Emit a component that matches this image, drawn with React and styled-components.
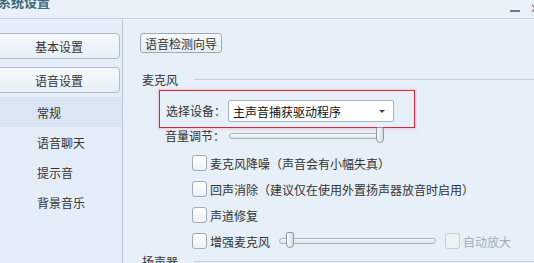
import React from "react";
import styled, { createGlobalStyle } from "styled-components";

const GlobalStyle = createGlobalStyle`
  html, body {
    margin: 0;
    padding: 0;
    background: #e7eff8;
  }
  body {
    font-family: "Noto Sans CJK SC", "Microsoft YaHei", sans-serif;
    font-size: 12px;
    color: #333;
  }
`;

const Window = styled.div`
  width: 534px;
  height: 263px;
  overflow: hidden;
  display: flex;
  flex-direction: column;
  background: #e7eff8;
`;

const TitleBar = styled.div`
  height: 18px;
  flex: none;
  display: flex;
  align-items: flex-start;
  justify-content: space-between;
  border-bottom: 1px solid #c3cfdb;
  background: #e9f0f7;
  box-shadow: 0 1px 0 #f6f9fc;
`;

const Title = styled.div`
  font-size: 13px;
  font-weight: bold;
  color: #3b6b7b;
  line-height: 13px;
  margin: -5px 0 0 -2px;
`;

const WinControls = styled.div`
  display: flex;
  align-items: center;
  gap: 10px;
  margin-top: 2px;
  margin-right: -7px;
`;

const Minimize = styled.div`
  width: 10px;
  height: 2px;
  background: #6b7885;
  margin-top: 6px;
`;

const Close = styled.div`
  font-size: 13px;
  line-height: 12px;
  color: #6b7885;
`;

const Body = styled.div`
  flex: 1;
  display: flex;
  min-height: 0;
`;

const Sidebar = styled.div`
  width: 122px;
  flex: none;
  border-right: 1px solid #bcc8d4;
  padding-top: 14px;
  display: flex;
  flex-direction: column;
  background: #e5eef8;
  & > * {
    flex-shrink: 0;
  }
`;

const SideButton = styled.div`
  height: 24px;
  margin-left: -2px;
  width: 120px;
  border: 1px solid #aebccb;
  border-radius: 0 4px 4px 0;
  background: linear-gradient(#f5f9fd, #e7eff7);
  display: flex;
  align-items: center;
  justify-content: center;
  margin-bottom: 8px;
  color: #333;
`;

const SideItem = styled.div`
  height: 30px;
  display: flex;
  align-items: center;
  padding-left: 37px;
  margin-top: ${(p) => (p.$first ? "-4px" : "0")};
  background: ${(p) => (p.$active ? "#dae6f4" : "transparent")};
  color: #333;
`;

const Main = styled.div`
  flex: 1;
  padding: 14px 0 0 17px;
  display: flex;
  flex-direction: column;
  min-width: 0;
  & > * {
    flex-shrink: 0;
  }
`;

const WizardButton = styled.div`
  align-self: flex-start;
  height: 18px;
  padding: 0 4px;
  border: 1px solid #9ea9b4;
  border-radius: 3px;
  background: linear-gradient(#f6f9fc, #e4ecf4);
  display: flex;
  align-items: center;
  color: #333;
`;

const GroupHeader = styled.div`
  display: flex;
  align-items: center;
  height: 14px;
  margin-top: ${(p) => p.$top || "0"};
  margin-left: 2px;
  &::after {
    content: "";
    flex: 1;
    height: 1px;
    margin-left: 16px;
    background: #c5d0db;
  }
`;

const DeviceBox = styled.div`
  margin: 4px 0 0 19px;
  width: 248px;
  height: 27px;
  padding: 9px 0 0 6px;
  border: 1px solid #d02a3c;
  box-shadow: 0 0 2px 1px rgba(245, 160, 170, 0.5);
  display: flex;
  align-items: flex-start;
  gap: 2px;
`;

const FieldLabel = styled.span`
  line-height: 22px;
  white-space: nowrap;
`;

const Select = styled.div`
  width: 166px;
  height: 22px;
  border: 1px solid #aab5c0;
  border-radius: 2px;
  background: #fff;
  display: flex;
  align-items: center;
  justify-content: space-between;
  padding: 0 8px 0 4px;
  box-sizing: border-box;
  color: #111;
  &::after {
    content: "";
    border-left: 3px solid transparent;
    border-right: 3px solid transparent;
    border-top: 3px solid #444;
  }
`;

const VolumeRow = styled.div`
  display: flex;
  align-items: center;
  height: 16px;
  margin: 0 0 0 25px;
  gap: 4px;
`;

const Track = styled.div`
  position: relative;
  width: ${(p) => p.$w}px;
  height: 4px;
  border: 1px solid #aab4be;
  border-radius: 3px;
  background: linear-gradient(#f8fafc, #dde4ea);
`;

const Thumb = styled.div`
  position: absolute;
  top: -7px;
  left: ${(p) => p.$left}px;
  width: 6px;
  height: 14px;
  border: 1px solid #8f9aa4;
  border-radius: 2px 2px 4px 4px;
  background: linear-gradient(90deg, #fafcfd, #d4dbe2);
`;

const Options = styled.div`
  display: flex;
  flex-direction: column;
  margin: 6px 0 0 52px;
`;

const OptionRow = styled.div`
  height: 26px;
  display: flex;
  align-items: center;
  gap: 3px;
  white-space: nowrap;
  color: #333;
`;

const Box = styled.span`
  width: 13px;
  height: 14px;
  flex: none;
  border: 1px solid ${(p) => (p.$disabled ? "#c6ced6" : "#9eaab6")};
  border-radius: 3px;
  background: ${(p) => (p.$disabled ? "#eef3f8" : "linear-gradient(#ffffff, #edf2f7)")};
`;

const Inline = styled.div`
  display: flex;
  align-items: center;
  gap: 3px;
  margin-left: ${(p) => p.$ml || "0"};
  color: ${(p) => (p.$disabled ? "#a3acb5" : "inherit")};
`;

export default function App() {
  return (
    <>
      <GlobalStyle />
      <Window>
        <TitleBar>
          <Title>系统设置</Title>
          <WinControls>
            <Minimize />
            <Close>✕</Close>
          </WinControls>
        </TitleBar>
        <Body>
          <Sidebar>
            <SideButton>基本设置</SideButton>
            <SideButton>语音设置</SideButton>
            <SideItem $active $first>常规</SideItem>
            <SideItem>语音聊天</SideItem>
            <SideItem>提示音</SideItem>
            <SideItem>背景音乐</SideItem>
          </Sidebar>
          <Main>
            <WizardButton>语音检测向导</WizardButton>
            <GroupHeader $top="19px">麦克风</GroupHeader>
            <DeviceBox>
              <FieldLabel>选择设备：</FieldLabel>
              <Select>主声音捕获驱动程序</Select>
            </DeviceBox>
            <VolumeRow>
              <FieldLabel>音量调节：</FieldLabel>
              <Track $w={150}>
                <Thumb $left={146} />
              </Track>
            </VolumeRow>
            <Options>
              <OptionRow>
                <Box />
                麦克风降噪（声音会有小幅失真）
              </OptionRow>
              <OptionRow>
                <Box />
                回声消除（建议仅在使用外置扬声器放音时启用）
              </OptionRow>
              <OptionRow>
                <Box />
                声道修复
              </OptionRow>
              <OptionRow>
                <Box />
                增强麦克风
                <Inline $ml="6px">
                  <Track $w={155}>
                    <Thumb $left={6} />
                  </Track>
                </Inline>
                <Inline $ml="6px" $disabled>
                  <Box $disabled />
                  自动放大
                </Inline>
              </OptionRow>
            </Options>
            <GroupHeader>扬声器</GroupHeader>
          </Main>
        </Body>
      </Window>
    </>
  );
}
